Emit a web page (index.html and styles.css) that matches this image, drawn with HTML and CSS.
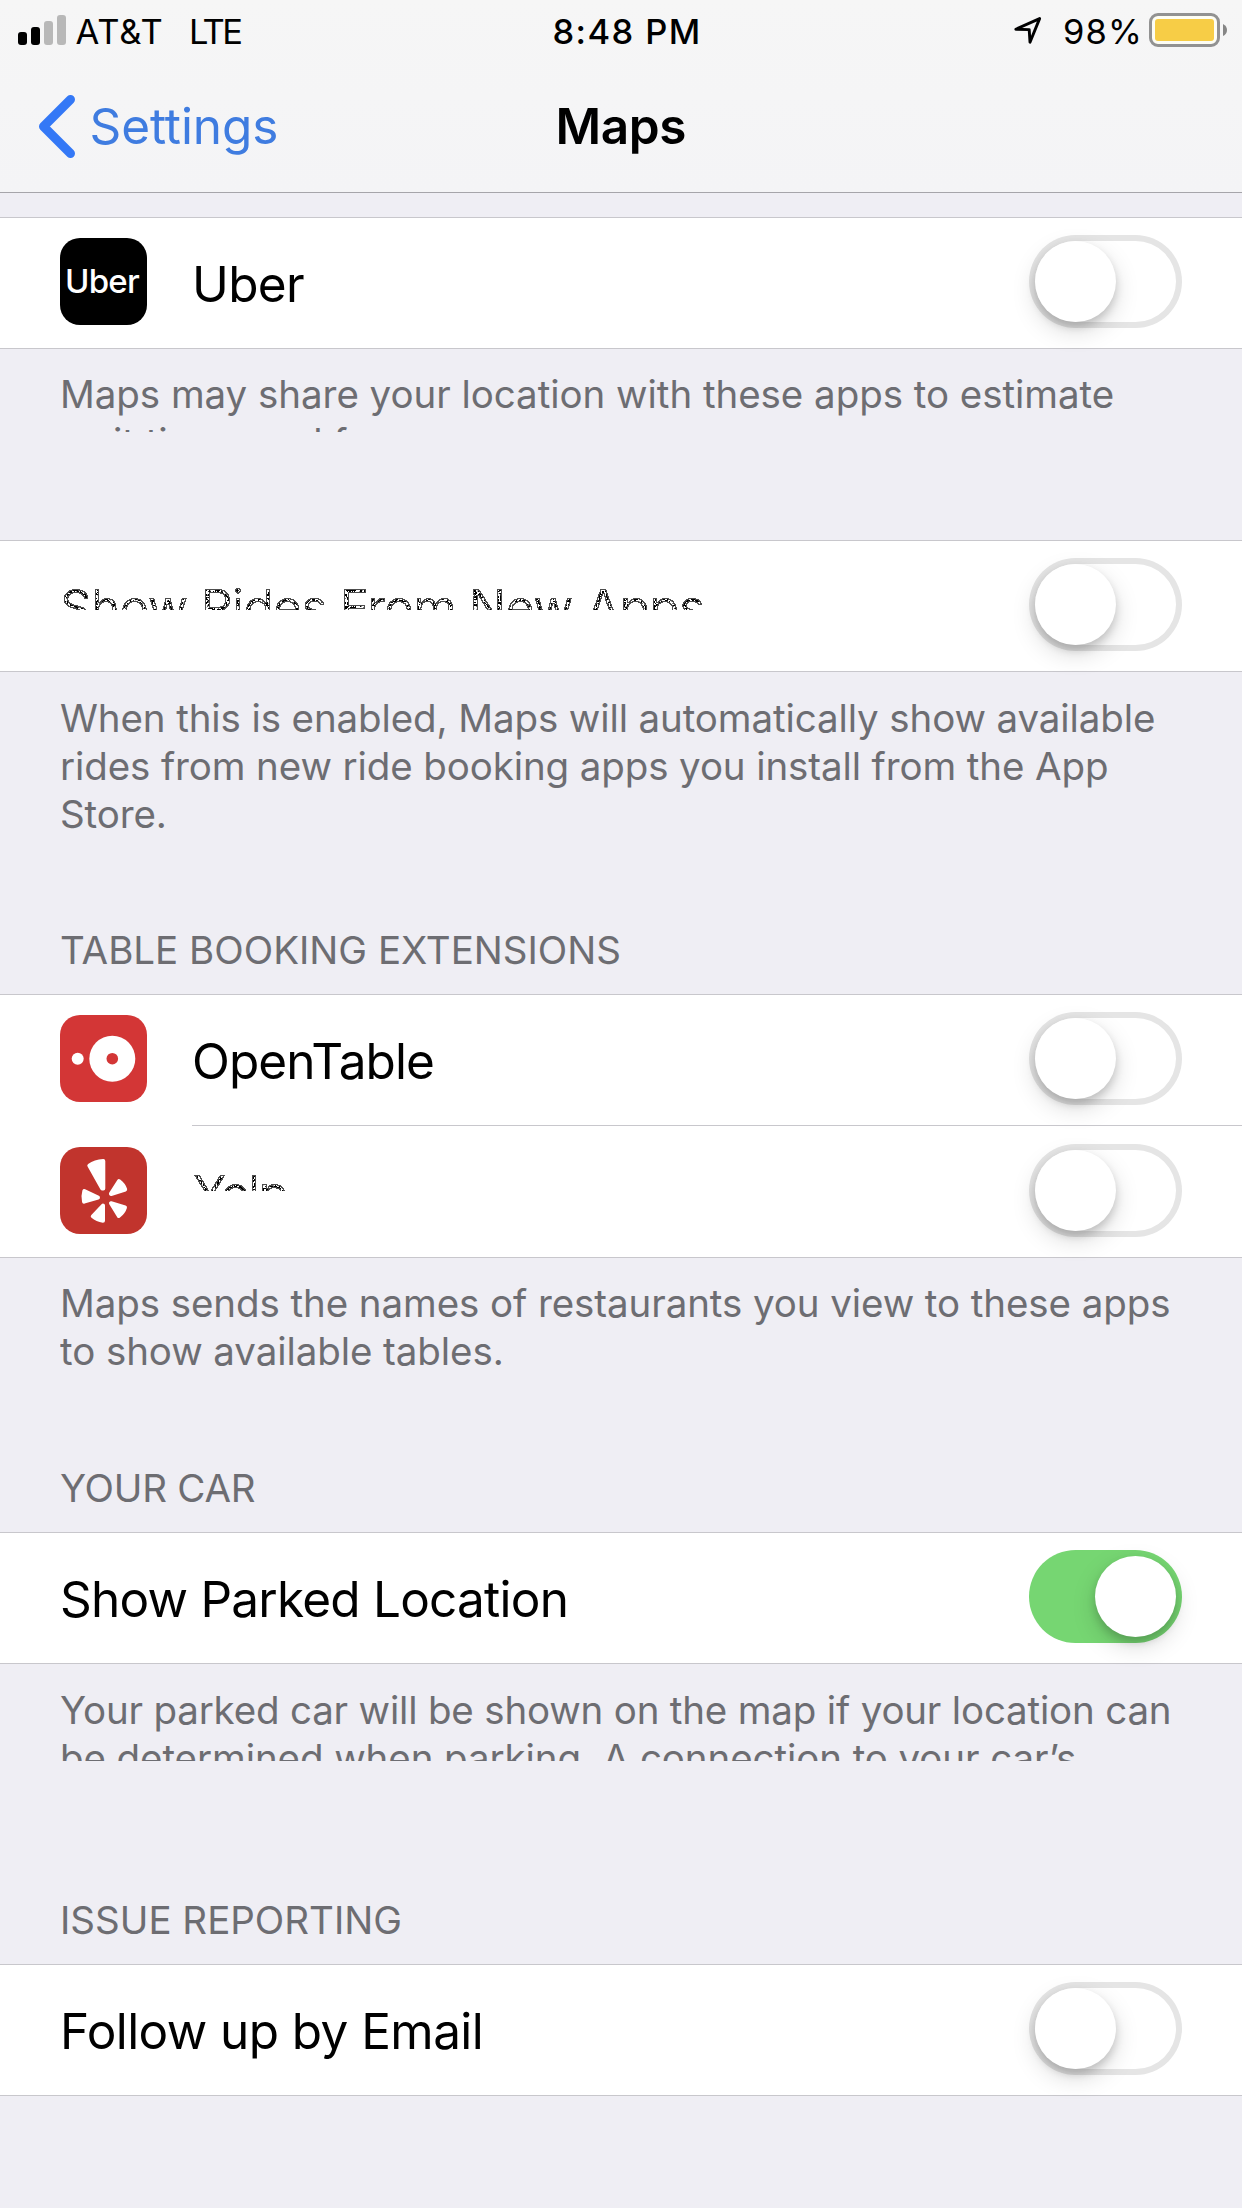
FILE: index.html
```html
<!DOCTYPE html>
<html lang="en">
<head>
<meta charset="utf-8">
<title>Maps</title>
<link rel="stylesheet" href="styles.css">
</head>
<body>
<svg class="defs" width="0" height="0" aria-hidden="true">
  <filter id="speckle" x="0" y="0" width="100%" height="100%" color-interpolation-filters="sRGB">
    <feComponentTransfer in="SourceAlpha" result="solid"><feFuncA type="discrete" tableValues="0 0 1 1 1"/></feComponentTransfer>
    <feMorphology in="solid" operator="erode" radius="1" result="core"/>
    <feComposite in="solid" in2="core" operator="out" result="edge"/>
    <feTurbulence type="fractalNoise" baseFrequency="0.47" numOctaves="2" seed="4"/>
    <feColorMatrix type="matrix" values="0 0 0 0 0  0 0 0 0 0  0 0 0 0 0  30 0 0 0 -14.6"/>
    <feComposite in2="core" operator="in" result="grain"/>
    <feComponentTransfer in="edge" result="softedge"><feFuncA type="linear" slope="0.7"/></feComponentTransfer>
    <feMerge><feMergeNode in="grain"/><feMergeNode in="softedge"/></feMerge>
  </filter>
</svg>

<header class="top">
  <div class="status">
    <div class="status-left">
      <div class="signal"><i class="bar b1"></i><i class="bar b2"></i><i class="bar b3"></i><i class="bar b4"></i></div>
      <span class="carrier">AT&amp;T</span>
      <span class="network">LTE</span>
    </div>
    <span class="time">8:48 PM</span>
    <div class="status-right">
      <svg class="arrow" width="30" height="30" viewBox="0 0 30 30"><path d="M2.8 14.2 26.6 3.6 17 27.2 16.2 14.6Z" fill="none" stroke="#000" stroke-width="2.9" stroke-linejoin="round"/></svg>
      <span class="percent">98%</span>
      <svg class="battery" width="79" height="34" viewBox="0 0 79 34"><rect x="1.5" y="1.5" width="68" height="31" rx="7.5" fill="#fdfdf4" stroke="#929292" stroke-width="3"/><rect x="6" y="6" width="59" height="22" rx="3" fill="#f7cd46"/><path d="M74 11Q78 13 78 17T74 23Z" fill="#868686"/></svg>
    </div>
  </div>
  <nav class="nav">
    <a class="back"><svg width="38" height="64" viewBox="0 0 38 64"><path d="M32.5 4.5 5.5 31.5 32.5 58.5" fill="none" stroke="#3478f6" stroke-width="9" stroke-linecap="round" stroke-linejoin="round"/></svg><span>Settings</span></a>
    <h1 class="title">Maps</h1>
  </nav>
</header>

<main>
  <section class="group">
    <div class="row">
      <span class="icon uber">Uber</span>
      <span class="label">Uber</span>
      <span class="switch"></span>
    </div>
  </section>
  <div class="foot foot-rides"><p class="note t1">Maps may share your location with these apps to estimate<br>wait times and fares.</p></div>

  <section class="group">
    <div class="row">
      <span class="label rides">Show Rides From New Apps</span>
      <span class="switch"></span>
    </div>
  </section>
  <div class="foot foot-new"><p class="note t2">When this is enabled, Maps will automatically show available<br>rides from new ride booking apps you install from the App<br>Store.</p></div>

  <h2 class="head">TABLE BOOKING EXTENSIONS</h2>
  <section class="group">
    <div class="row">
      <svg class="icon" viewBox="0 0 87 87"><rect width="87" height="87" rx="20" fill="#d33636"/><circle cx="17.7" cy="43.7" r="6" fill="#fff"/><circle cx="52.3" cy="43.7" r="23" fill="#fff"/><circle cx="52.3" cy="43.7" r="5.8" fill="#d33636"/></svg>
      <span class="label open">OpenTable</span>
      <span class="switch"></span>
    </div>
    <div class="row next">
      <svg class="icon" viewBox="0 0 87 87"><rect width="87" height="87" rx="20" fill="#c1342d"/><g fill="#fff" stroke="#fff" stroke-width="4" stroke-linejoin="round"><path d="M29.3 18.6Q35 14.5 43.3 14V41.5H42.2Z"/><path d="M59 34.2Q63.5 37.5 65.2 42.5L51 47V46.5Z"/><path d="M24.3 44Q22.8 49 24 54.7L38 50.5Z"/><path d="M43 58.5V73.7Q37 73 32.8 69.3Z"/><path d="M51 56.2 65 60.5Q63.5 65.5 58.8 69Z"/></g></svg>
      <span class="label yelp">Yelp</span>
      <span class="switch"></span>
    </div>
  </section>
  <div class="foot foot-table"><p class="note t3">Maps sends the names of restaurants you view to these apps<br>to show available tables.</p></div>

  <h2 class="head car">YOUR CAR</h2>
  <section class="group">
    <div class="row">
      <span class="label parked">Show Parked Location</span>
      <span class="switch on"></span>
    </div>
  </section>
  <div class="foot foot-car"><p class="note t4">Your parked car will be shown on the map if your location can<br><span class="t5">be determined when parking. A connection to your car’s</span></p></div>

  <h2 class="head issue">ISSUE REPORTING</h2>
  <section class="group">
    <div class="row">
      <span class="label email">Follow up by Email</span>
      <span class="switch"></span>
    </div>
  </section>
</main>
</body>
</html>
```
FILE: styles.css
```css
* { box-sizing: border-box; margin: 0; padding: 0; }
body {
  width: 1242px;
  height: 2208px;
  overflow: hidden;
  background: #efeef4;
  color: #000;
  font-family: Inter, "Liberation Sans", sans-serif;
  white-space: nowrap;
}
.defs { display: block; position: absolute; }

.top { height: 193px; background: linear-gradient(#f6f6f6, #f4f4f6); border-bottom: 1px solid #a6a5aa; }
.status {
  display: grid;
  grid-template-columns: 552.5px auto 1fr;
  height: 62px;
  padding-top: 8px;
  font-size: 34.5px;
  line-height: 48px;
}
.status-left { display: flex; padding-left: 18px; }
.signal { display: flex; align-items: flex-end; gap: 4px; width: 57.5px; height: 37px; }
.bar { width: 9px; border-radius: 3px; background: #000; }
.b1 { height: 13px; }
.b2 { height: 18px; }
.b3 { height: 24px; background: #b8b8b8; }
.b4 { height: 30px; background: #b8b8b8; }
.carrier { width: 113.5px; letter-spacing: .9px; }
.network { letter-spacing: -2.6px; }
.time { font-weight: 500; letter-spacing: 1.4px; }
.status-right { display: flex; justify-content: flex-end; padding-right: 14px; }
.arrow { margin: 7px 20px 0 0; }
.percent { width: 86px; letter-spacing: 1.1px; }
.battery { margin-top: 5px; }

.nav { display: flex; align-items: flex-start; padding: 33px 0 0 38px; font-size: 49.5px; line-height: 60px; }
.back { display: flex; width: 517.5px; color: #3f7ce0; letter-spacing: -.1px; }
.back svg { width: 38px; margin-right: 13.5px; }
.back span { padding-top: 1px; }
.title { padding-top: 1px; font-size: inherit; font-weight: 600; letter-spacing: -.4px; }

main { padding-top: 24px; }
.group { border: solid #c8c7cc; border-width: 1px 0; background: #fff; }
.row { display: flex; align-items: center; height: 130px; padding: 0 60px 0 60px; }
.row.next { position: relative; height: 132px; padding-top: 2px; }
.row.next::before { content: ""; position: absolute; top: 0; left: 192px; right: 0; height: 1px; background: #c8c7cc; }
.icon { flex: none; width: 87px; height: 87px; margin: 0 45px 3px 0; }
.uber {
  border-radius: 20px;
  background: #000;
  color: #fff;
  font-size: 33px;
  font-weight: 500;
  letter-spacing: -.75px;
  line-height: 87px;
  padding-left: 5px;
}
.label { padding-top: 2px; font-size: 49.5px; line-height: 60px; letter-spacing: -.67px; }
.open { letter-spacing: -.91px; }
.yelp { letter-spacing: -1.7px; padding-left: 1px; filter: url(#speckle); clip-path: inset(0 0 32px); }
.rides { filter: url(#speckle); clip-path: inset(0 0 27px); }
.parked { letter-spacing: -.77px; }
.email { letter-spacing: -.58px; }

.switch {
  flex: none;
  width: 153px;
  height: 93px;
  margin: 0 0 3px auto;
  padding: 6px;
  border-radius: 47px;
  background: #fff;
  box-shadow: inset 0 0 0 6px #e5e5e5;
}
.switch::before {
  content: "";
  display: block;
  width: 81px;
  height: 81px;
  border-radius: 50%;
  background: #fff;
  box-shadow: 0 9px 24px rgba(0, 0, 0, .15), 0 5px 9px rgba(0, 0, 0, .16);
}
.switch.on { background: #76d672; box-shadow: none; }
.switch.on::before { margin-left: 60px; }

.foot { padding: 21px 60px 0; color: #6d6d72; font-size: 38.5px; line-height: 48px; }
.note { overflow: hidden; }
.foot-rides { height: 191px; }
.foot-rides .note { height: 62px; }
.foot-new { height: 254px; padding-top: 22px; }
.foot-table { height: 206px; }
.foot-car { height: 232px; padding-top: 22px; }
.foot-car .note { height: 75px; }
.t1 { letter-spacing: -.04px; }
.t2 { letter-spacing: -.11px; }
.t3 { letter-spacing: -.08px; }
.t4 { letter-spacing: -.18px; }
.t5 { letter-spacing: -.08px; }
.head { height: 68px; padding: 0 60px; color: #6d6d72; font-size: 38.5px; font-weight: 400; line-height: 48px; }
.car { letter-spacing: -.25px; }
.issue { letter-spacing: 0; }
```
